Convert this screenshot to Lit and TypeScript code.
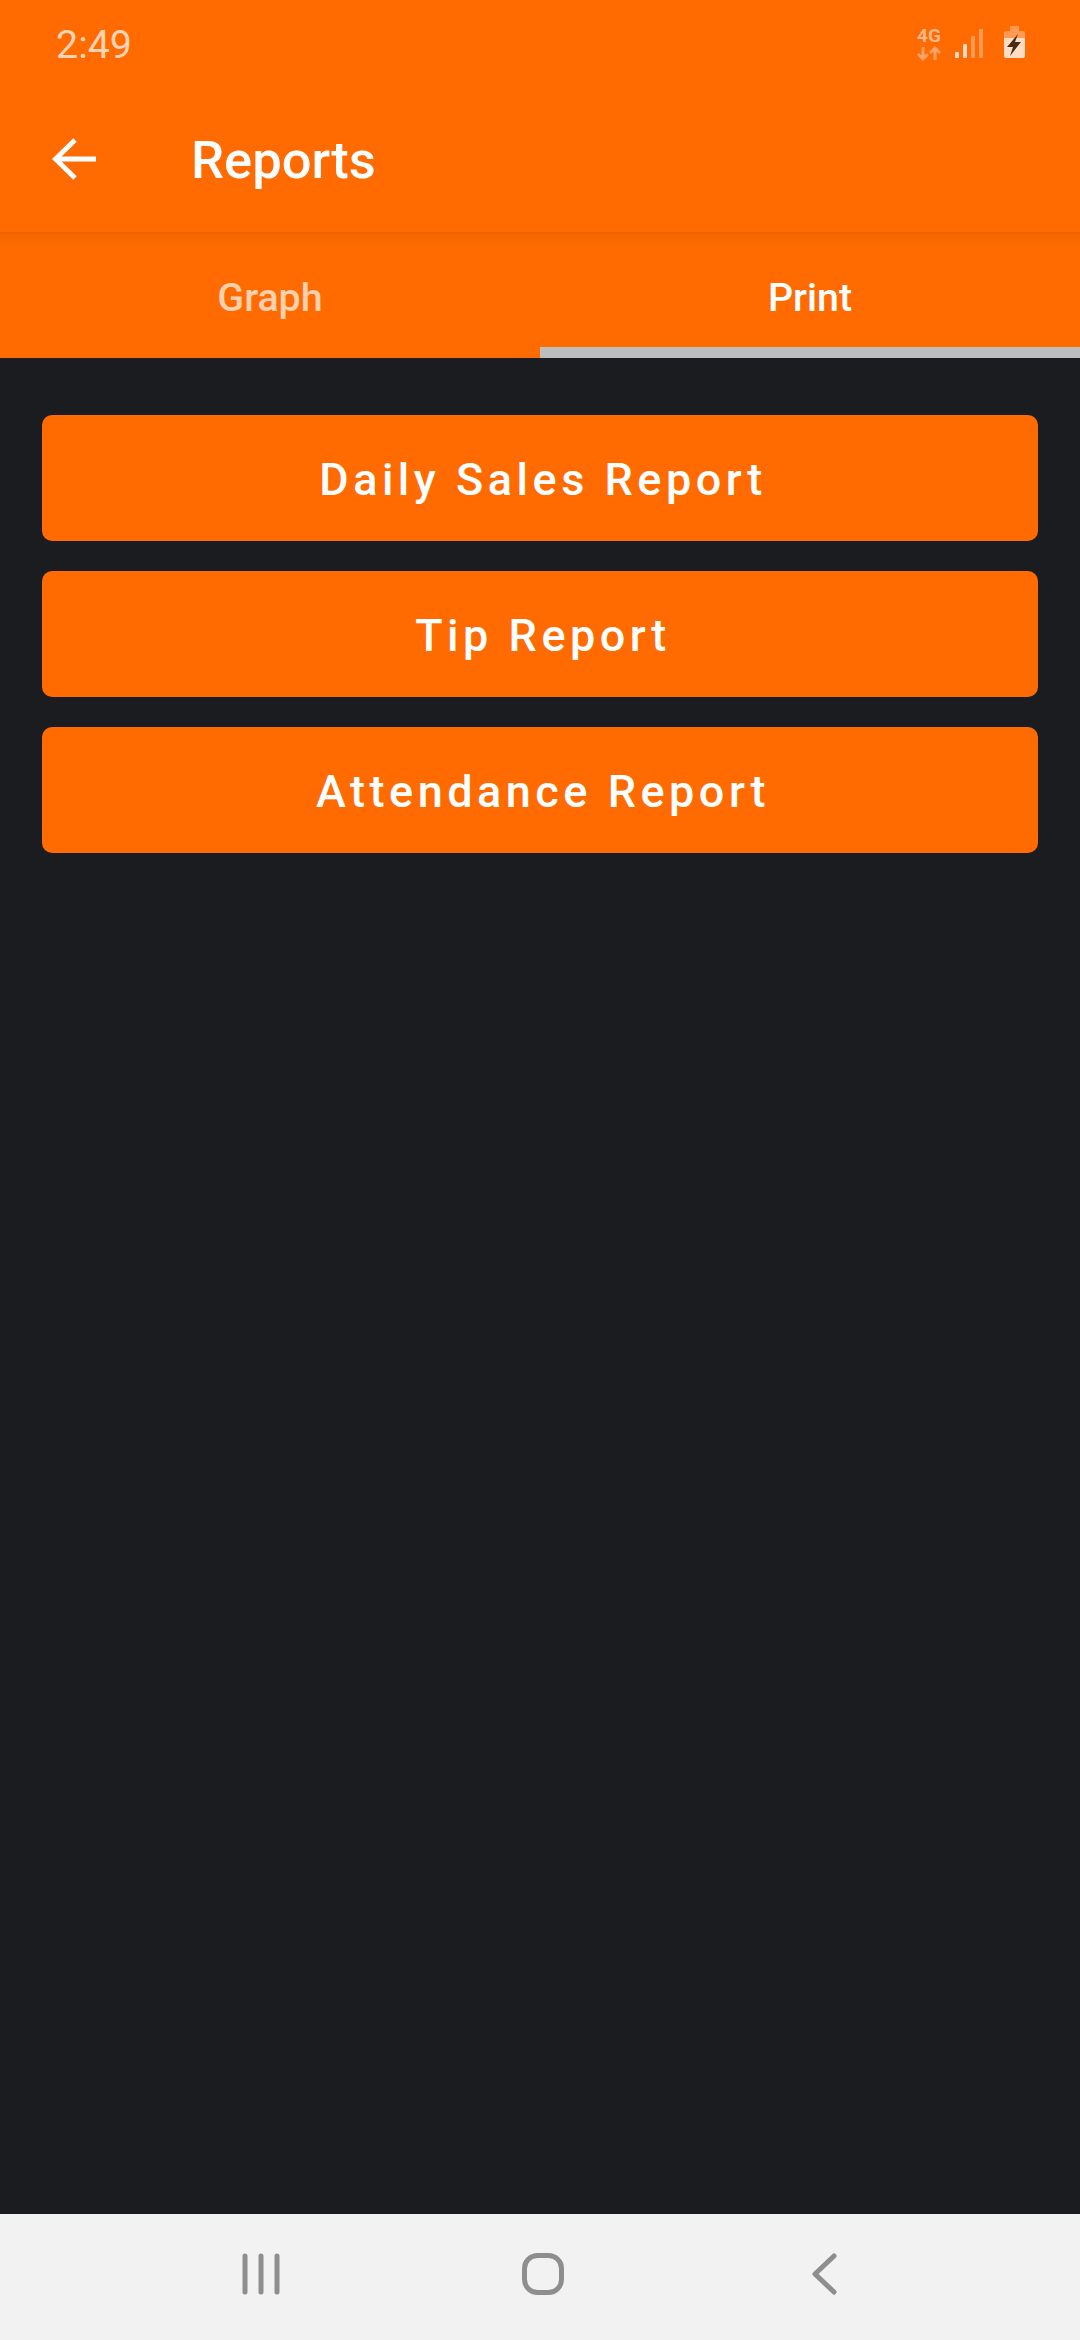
import { LitElement, html, css } from "lit";
import { customElement } from "lit/decorators.js";

@customElement("app-root")
export class AppRoot extends LitElement {
  static styles = css`
    :host { display: block; width: 1080px; height: 2340px; overflow: hidden; font-family: Roboto, "Liberation Sans", sans-serif; }
    .page { display: flex; flex-direction: column; height: 2340px; background: #1b1c20; }
    .status { height: 85px; flex: none; background: #ff6b00; display: flex; align-items: center; padding: 4px 0 0 56px; box-sizing: border-box; }
    .time { font-size: 39.4px; line-height: 1; color: #ffd3b3; flex: 1; }
    .toolbar { height: 147px; flex: none; box-sizing: border-box; background: #ff6b00; display: flex; align-items: center; padding: 4px 0 0 52px; }
    .back { width: 44px; height: 44px; display: block; margin: -4px 95px 0 0; }
    .title { font-size: 52.5px; font-weight: 500; color: #fff; line-height: 1; }
    .tabs { height: 126px; flex: none; display: flex; background: linear-gradient(#ec6300, #f56700 3px, #ff6b00 14px); }
    .tab { flex: 1; display: flex; align-items: center; justify-content: center; box-sizing: border-box; font-size: 39.4px; font-weight: 500; color: #ffd0ae; padding-top: 4px; }
    .tab.on { color: #fff; border-bottom: 11px solid #bdbdbd; padding-top: 15px; }
    .main { flex: 1; display: flex; flex-direction: column; gap: 30px; padding: 57px 42px 0; }
    .btn { height: 126px; border-radius: 10px; background: #ff6b00; display: flex; align-items: center; justify-content: center; color: #fff; font-size: 45px; font-weight: 500; letter-spacing: 4.5px; padding: 2px 0 0 6px; box-sizing: border-box; }
    .nav { height: 126px; flex: none; background: #f2f2f2; display: flex; align-items: center; justify-content: center; }
    .nav svg { width: 680px; height: 126px; display: block; }
    .sys { position: absolute; left: 900px; top: 0; width: 140px; height: 80px; }
    .g4 { font-family: Roboto, sans-serif; font-weight: 700; font-size: 19px; fill: #ffb88a; }
  `;

  render() {
    return html`
      <div class="page">
        <div class="status">
          <div class="time">2:49</div>
          ${this.systemIcons()}
        </div>
        <div class="toolbar">
          <svg class="back" viewBox="0 0 44 44" fill="none" stroke="#fff" stroke-width="5">
            <path d="M44 22H4M23 3 3.5 22 23 41"/>
          </svg>
          <div class="title">Reports</div>
        </div>
        <div class="tabs">
          <div class="tab">Graph</div>
          <div class="tab on">Print</div>
        </div>
        <div class="main">
          <div class="btn">Daily Sales Report</div>
          <div class="btn">Tip Report</div>
          <div class="btn">Attendance Report</div>
        </div>
        <div class="nav">
          <svg viewBox="200 2214 680 126" fill="none" stroke="#8e8e8e">
            <path stroke-width="5" stroke-linecap="round" d="M245 2256V2292M261 2256V2292M277 2256V2292"/>
            <rect x="524.5" y="2255.5" width="37" height="37" rx="13" stroke-width="5"/>
            <path stroke-width="5" stroke-linecap="round" stroke-linejoin="round" d="M834 2256 815 2274 834 2292"/>
          </svg>
        </div>
      </div>
    `;
  }

  systemIcons() {
    return html`<svg class="sys" viewBox="900 0 140 80">
      <text x="917" y="42" class="g4">4G</text>
      <path fill="none" stroke="#ffa266" stroke-width="3" d="M923 47V59M918 54 923 59 928 54M935 60V48M930 53 935 48 940 53"/>
      <g fill="#ffd9bf">
        <rect x="955" y="52" width="4" height="6" rx="1"/>
        <rect x="963" y="44" width="4" height="14" rx="1"/>
      </g>
      <g fill="#ff9a55">
        <rect x="971" y="36" width="4" height="22" rx="1"/>
        <rect x="979" y="29" width="4" height="29" rx="1"/>
      </g>
      <rect x="1010" y="26" width="9" height="6" fill="#ff9a55"/>
      <path d="M1004 33a2 2 0 0 1 2-2h17a2 2 0 0 1 2 2v5h-21z" fill="#ff9a55"/>
      <path d="M1004 38h21v18a2 2 0 0 1-2 2h-17a2 2 0 0 1-2-2z" fill="#ffdcc4"/>
      <path d="M1018 34 1007 47h6l-3 9 11-14h-6l3-8z" fill="#4a2a15"/>
    </svg>`;
  }
}
